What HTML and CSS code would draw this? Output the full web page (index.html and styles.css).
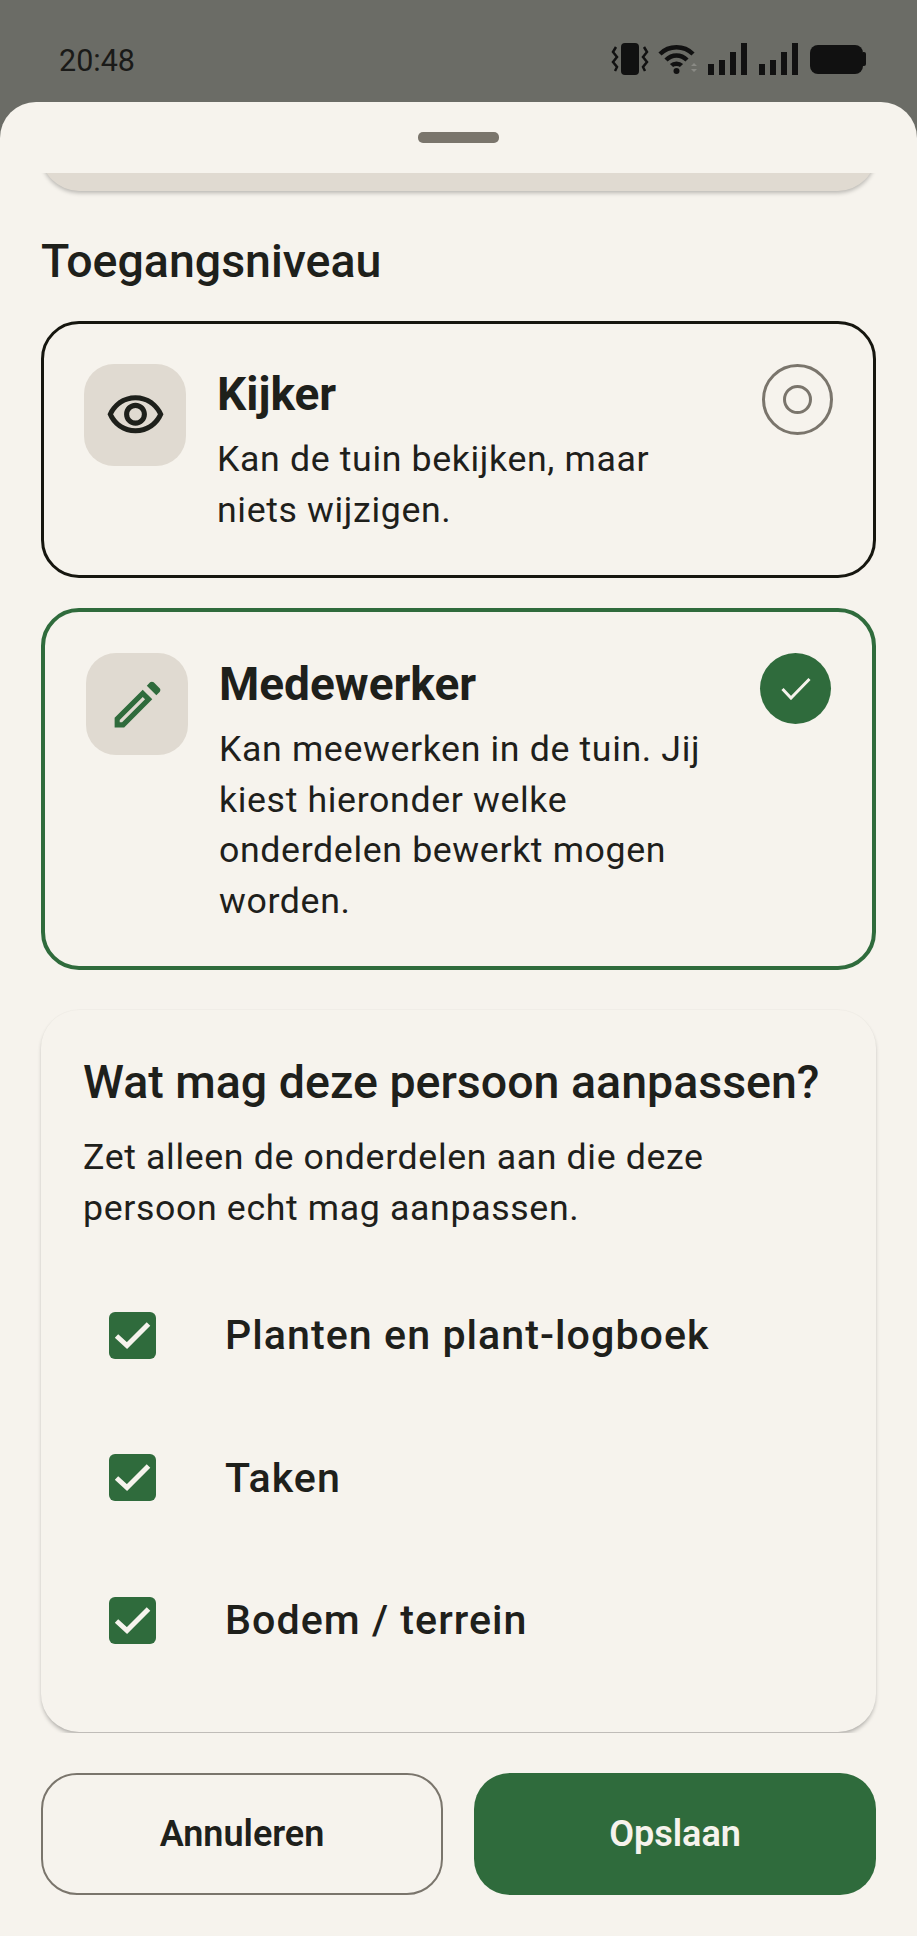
FILE: index.html
```html
<!DOCTYPE html>
<html lang="nl">

<head>
    <meta charset="UTF-8" />
    <meta name="viewport" content="width=device-width, initial-scale=1.0" />
    <title>Toegangsniveau</title>
    <link rel="stylesheet" href="styles.css">
</head>

<body>
    <div class="screen">
        <!-- statusbalk -->
        <div class="status-bar">
            <span class="time">20:48</span>
            <div class="status-icons">
                <svg class="ic-vibrate" viewBox="0 0 38 32" width="38" height="32">
                    <rect x="10" y="0" width="18" height="32" rx="4" fill="#111"/>
                    <path d="M5 4 L2 9 L6 14 L2 19 L6 24 L4 28 M33 4 L36 9 L32 14 L36 19 L32 24 L34 28" fill="none" stroke="#111" stroke-width="2.500"/>
                </svg>
                <svg class="ic-wifi" viewBox="0 0 40 30" width="40" height="30">
                    <path d="M2 10 C11 1 26 1 35 10 M8 16 C14 10 23 10 29 16 M13.500 21.500 C16 19 21 19 23.500 21.500" fill="none" stroke="#111" stroke-width="4.500"/>
                    <circle cx="18.500" cy="27" r="3" fill="#111"/>
                    <path d="M33 22 L36 19 L39 22 Z M33 25 L39 25 L36 28 Z" fill="#8a8a85"/>
                </svg>
                <div class="signal">
                    <i class="bar-1"></i><i class="bar-2"></i><i class="bar-3"></i><i class="bar-4"></i>
                </div>
                <div class="signal">
                    <i class="bar-1"></i><i class="bar-2"></i><i class="bar-3"></i><i class="bar-4"></i>
                </div>
                <div class="battery"><span></span><i></i></div>
            </div>
        </div>

        <div class="sheet">
            <div class="handle"></div>

            <div class="scroll">
                <div class="peek-card"></div>

                <h2 class="section-title">Toegangsniveau</h2>

                <!-- Kijker -->
                <div class="role-card role-viewer">
                    <div class="role-icon">
                        <svg viewBox="0 0 24 24" width="61" height="61" fill="#1e201b">
                            <path d="M12 6a9.770 9.770 0 0 1 8.820 5.500C19.170 14.870 15.790 17 12 17s-7.170-2.130-8.820-5.500A9.770 9.770 0 0 1 12 6m0-2C7 4 2.730 7.110 1 11.500 2.730 15.890 7 19 12 19s9.270-3.110 11-7.500C21.270 7.110 17 4 12 4zm0 5a2.500 2.500 0 0 1 0 5 2.500 2.500 0 0 1 0-5m0-2c-2.480 0-4.500 2.020-4.500 4.500S9.520 16 12 16s4.500-2.020 4.500-4.500S14.480 7 12 7z"/>
                        </svg>
                    </div>
                    <div class="role-text">
                        <h3>Kijker</h3>
                        <p>Kan de tuin bekijken, maar niets wijzigen.</p>
                    </div>
                    <div class="radio"><span></span></div>
                </div>

                <!-- Medewerker -->
                <div class="role-card role-editor">
                    <div class="role-icon">
                        <svg viewBox="0 0 24 24" width="61" height="61" fill="#2f6b3c">
                            <path d="M14.060 9.020l.92.92L5.920 19H5v-.92l9.060-9.060M14.060 6.190L3 17.250V21h3.750L17.810 9.940l-3.750-3.750z"/>
                            <path d="M17.660 3c-.25 0-.51.100-.7.290l-1.300 1.300 3.750 3.750 1.300-1.300c.39-.39.39-1.020 0-1.410l-2.340-2.340c-.2-.2-.45-.29-.71-.29z"/>
                        </svg>
                    </div>
                    <div class="role-text">
                        <h3>Medewerker</h3>
                        <p>Kan meewerken in de tuin. Jij kiest hieronder welke onderdelen bewerkt mogen worden.</p>
                    </div>
                    <div class="radio-on">
                        <svg viewBox="0 0 30 23" width="30" height="23">
                            <path d="M1.500 12 L10 21 L28.500 2" fill="none" stroke="#f6f3ed" stroke-width="3"/>
                        </svg>
                    </div>
                </div>

                <!-- rechten -->
                <div class="rights-card">
                    <h3>Wat mag deze persoon aanpassen?</h3>
                    <p>Zet alleen de onderdelen aan die deze persoon echt mag aanpassen.</p>
                    <ul class="rights-list">
                        <li>
                            <svg viewBox="0 0 47 47" width="47" height="47"><rect width="47" height="47" rx="6" fill="#2f6b3c"/><path d="M7.500 24 L18 33.500 L39.500 12" fill="none" stroke="#f6f3ed" stroke-width="5"/></svg>
                            <span>Planten en plant-logboek</span>
                        </li>
                        <li>
                            <svg viewBox="0 0 47 47" width="47" height="47"><rect width="47" height="47" rx="6" fill="#2f6b3c"/><path d="M7.500 24 L18 33.500 L39.500 12" fill="none" stroke="#f6f3ed" stroke-width="5"/></svg>
                            <span>Taken</span>
                        </li>
                        <li>
                            <svg viewBox="0 0 47 47" width="47" height="47"><rect width="47" height="47" rx="6" fill="#2f6b3c"/><path d="M7.500 24 L18 33.500 L39.500 12" fill="none" stroke="#f6f3ed" stroke-width="5"/></svg>
                            <span>Bodem / terrein</span>
                        </li>
                    </ul>
                </div>
            </div>

            <div class="actions">
                <button class="btn btn-cancel">Annuleren</button>
                <button class="btn btn-save">Opslaan</button>
            </div>
        </div>
    </div>
</body>

</html>
```

FILE: styles.css
```css
* {
    box-sizing: border-box;
}

html,
body {
    margin: 0;
    padding: 0;
}

body {
    font-family: Roboto, "Noto Sans", sans-serif;
    color: #1e201b;
    background: #6b6c66;
}

.screen {
    width: 917px;
    height: 1936px;
    display: flex;
    flex-direction: column;
    overflow: hidden;
}

/* statusbalk */
.status-bar {
    height: 102px;
    flex-shrink: 0;
    display: flex;
    justify-content: space-between;
    align-items: flex-start;
    padding: 43px 51px 0 59px;
}

.time {
    font-size: 30.500px;
    line-height: 35px;
    color: #1a1a18;
}

.status-icons {
    display: flex;
    align-items: center;
    height: 32px;
}

.ic-vibrate {
    margin-right: 9px;
}

.ic-wifi {
    margin-right: 10px;
}

.signal {
    display: flex;
    align-items: flex-end;
    gap: 5px;
    height: 32px;
    margin-right: 12px;
}

.signal i {
    display: block;
    width: 6px;
    background: #111;
}

.signal .bar-1 {
    height: 11px;
}

.signal .bar-2 {
    height: 15px;
}

.signal .bar-3 {
    height: 23px;
}

.signal .bar-4 {
    height: 32px;
}

.battery {
    display: flex;
    align-items: center;
}

.battery span {
    display: block;
    width: 53px;
    height: 29px;
    background: #111;
    border-radius: 8px;
}

.battery i {
    display: block;
    width: 3px;
    height: 14px;
    background: #111;
    border-radius: 0 2px 2px 0;
}

/* sheet */
.sheet {
    flex: 1;
    min-height: 0;
    display: flex;
    flex-direction: column;
    background: #f6f3ed;
    border-radius: 36px 36px 0 0;
}

.handle {
    width: 81px;
    height: 11px;
    margin: 30px auto 30px;
    background: #7a756c;
    border-radius: 5px;
    flex-shrink: 0;
}

.scroll {
    flex: 1;
    min-height: 0;
    overflow: hidden;
    padding: 0 41px;
}

.peek-card {
    height: 80px;
    margin: -62px 0 0;
    background: #e0dad1;
    border-radius: 38px;
    box-shadow: 0 2px 4px rgba(0, 0, 0, 0.25);
}

.section-title {
    margin: 44px 0 34px;
    font-size: 46.500px;
    line-height: 52px;
    font-weight: 500;
}

.role-card {
    display: flex;
    align-items: flex-start;
    border-radius: 38px;
    background: #f6f3ed;
}

.role-viewer {
    height: 257px;
    padding: 39px 40px;
    border: 3px solid #16160f;
    margin-bottom: 30px;
}

.role-editor {
    height: 362px;
    padding: 41px;
    border: 4px solid #2f6b3c;
    margin-bottom: 40px;
}

.role-viewer .role-icon,
.role-viewer .radio {
    margin-top: 1px;
}

.role-icon {
    width: 102px;
    height: 102px;
    flex-shrink: 0;
    display: flex;
    align-items: center;
    justify-content: center;
    background: #e0dad1;
    border-radius: 30px;
    margin-right: 31px;
}

.role-text {
    flex: 1;
    min-width: 0;
    padding-top: 3px;
}

.role-text h3 {
    margin: 0 0 12px;
    font-size: 46px;
    line-height: 56px;
    font-weight: 700;
}

.role-text p {
    margin: 0;
    font-size: 35.700px;
    line-height: 50.600px;
    letter-spacing: 0.64px;
}

.radio {
    width: 71px;
    height: 71px;
    flex-shrink: 0;
    margin-left: 48px;
    display: flex;
    align-items: center;
    justify-content: center;
    border: 3px solid #7a756c;
    border-radius: 50%;
}

.radio span {
    width: 29px;
    height: 29px;
    border: 3px solid #7a756c;
    border-radius: 50%;
}

.radio-on {
    width: 71px;
    height: 71px;
    flex-shrink: 0;
    margin-left: 48px;
    display: flex;
    align-items: center;
    justify-content: center;
    background: #2f6b3c;
    border-radius: 50%;
}

.rights-card {
    height: 722px;
    padding: 46px 42px 0;
    border-radius: 38px;
    background: #f6f3ed;
    box-shadow: 0 3px 4px -1px rgba(0, 0, 0, 0.3), 0 -1px 0 rgba(0, 0, 0, 0.02);
}

.rights-card h3 {
    margin: 0 0 24px;
    font-size: 46.500px;
    line-height: 52px;
    font-weight: 500;
}

.rights-card p {
    margin: 0;
    font-size: 35.700px;
    line-height: 50.600px;
    letter-spacing: 0.64px;
}

.rights-list {
    list-style: none;
    margin: 31px 0 0;
    padding: 0;
}

.rights-list li {
    height: 142.500px;
    display: flex;
    align-items: center;
    padding-left: 26px;
}

.rights-list svg {
    flex-shrink: 0;
    margin-right: 69px;
}

.rights-list span {
    font-size: 41.200px;
    font-weight: 500;
    letter-spacing: 1.030px;
}

/* knoppen */
.actions {
    flex-shrink: 0;
    display: grid;
    grid-template-columns: 1fr 1fr;
    gap: 31px;
    padding: 40px 41px 41px;
}

.btn {
    height: 122px;
    appearance: none;
    border: none;
    border-radius: 36px;
    font-family: inherit;
    font-size: 36px;
    font-weight: 600;
}

.btn-cancel {
    background: #f6f3ed;
    border: 2.500px solid #7a756c;
    color: #1e201b;
}

.btn-save {
    background: #2f6b3c;
    color: #f6f3ed;
}
```
